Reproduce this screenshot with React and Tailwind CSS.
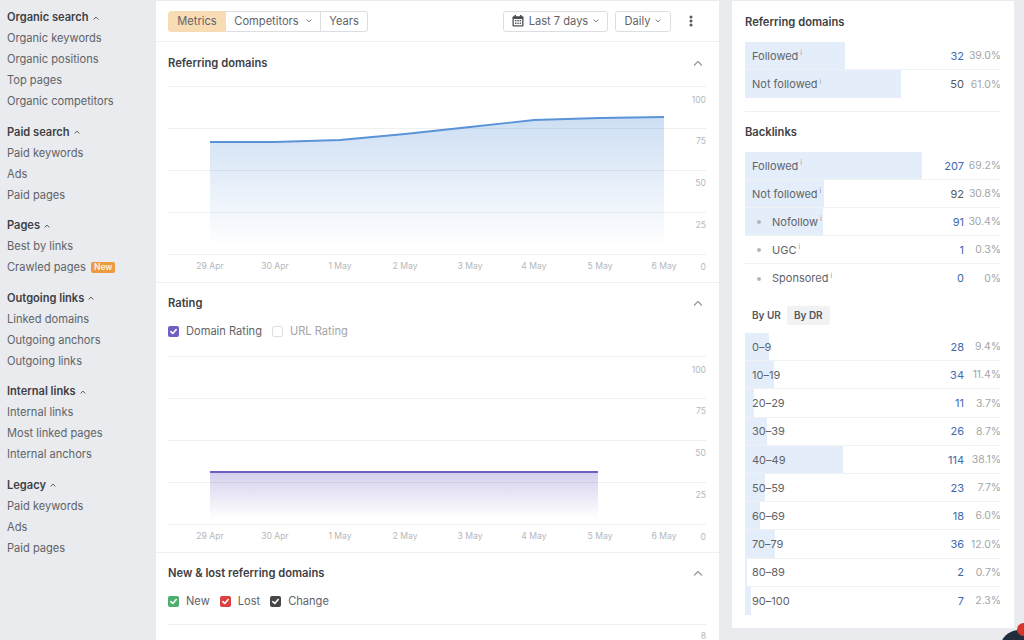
const nav = [
  { title: "Organic search", items: ["Organic keywords", "Organic positions", "Top pages", "Organic competitors"] },
  { title: "Paid search", items: ["Paid keywords", "Ads", "Paid pages"] },
  { title: "Pages", items: ["Best by links", "Crawled pages"] },
  { title: "Outgoing links", items: ["Linked domains", "Outgoing anchors", "Outgoing links"] },
  { title: "Internal links", items: ["Internal links", "Most linked pages", "Internal anchors"] },
  { title: "Legacy", items: ["Paid keywords", "Ads", "Paid pages"] },
];

const refDomains = [
  { label: "Followed", info: true, value: "32", pct: "39.0%", bar: 100, blue: true },
  { label: "Not followed", info: true, value: "50", pct: "61.0%", bar: 156 },
];

const backlinks = [
  { label: "Followed", info: true, value: "207", pct: "69.2%", bar: 177, blue: true },
  { label: "Not followed", info: true, value: "92", pct: "30.8%", bar: 79 },
  { label: "Nofollow", info: true, sub: true, value: "91", pct: "30.4%", bar: 78, blue: true },
  { label: "UGC", info: true, sub: true, value: "1", pct: "0.3%", bar: 0, blue: true },
  { label: "Sponsored", info: true, sub: true, value: "0", pct: "0%", bar: 0, blue: true },
];

const ranges = [
  { label: "0–9", value: "28", pct: "9.4%", bar: 24, blue: true },
  { label: "10–19", value: "34", pct: "11.4%", bar: 29, blue: true },
  { label: "20–29", value: "11", pct: "3.7%", bar: 9, blue: true },
  { label: "30–39", value: "26", pct: "8.7%", bar: 22, blue: true },
  { label: "40–49", value: "114", pct: "38.1%", bar: 98, blue: true },
  { label: "50–59", value: "23", pct: "7.7%", bar: 20, blue: true },
  { label: "60–69", value: "18", pct: "6.0%", bar: 15, blue: true },
  { label: "70–79", value: "36", pct: "12.0%", bar: 30, blue: true },
  { label: "80–89", value: "2", pct: "0.7%", bar: 2, blue: true },
  { label: "90–100", value: "7", pct: "2.3%", bar: 6, blue: true },
];

const dates = [
  ["29 Apr", 42],
  ["30 Apr", 107],
  ["1 May", 172],
  ["2 May", 237],
  ["3 May", 302],
  ["4 May", 366],
  ["5 May", 432],
  ["6 May", 496],
];

function Chevron({ up, className }) {
  return (
    <svg className={className} viewBox="0 0 10 6" fill="none" stroke="currentColor" strokeWidth="1.4" strokeLinecap="round" strokeLinejoin="round">
      <path d={up ? "M1.5 5 5 1.5 8.5 5" : "M1.5 1 5 4.5 8.5 1"} />
    </svg>
  );
}

function Check({ className, off }) {
  return (
    <span className={"flex h-[11px] w-[11px] items-center justify-center rounded-[2px] " + className}>
      {!off && (
        <svg className="h-[9px] w-[9px]" viewBox="0 0 10 10" fill="none" stroke="white" strokeWidth="1.8" strokeLinecap="round" strokeLinejoin="round">
          <path d="M2 5.2 4.2 7.2 8 2.8" />
        </svg>
      )}
    </span>
  );
}

function CalendarIcon() {
  return (
    <svg className="h-[12px] w-[12px]" viewBox="0 0 12 12" fill="#4a4d50">
      <rect x="2.5" y="0" width="1.5" height="2.5" />
      <rect x="8" y="0" width="1.5" height="2.5" />
      <rect x="0.5" y="1.2" width="11" height="10.3" rx="1" />
      <rect x="1.8" y="4" width="8.4" height="6.3" fill="#fff" />
      <g>
        <rect x="3" y="5" width="1.5" height="1.3" />
        <rect x="5.3" y="5" width="1.5" height="1.3" />
        <rect x="7.6" y="5" width="1.5" height="1.3" />
        <rect x="3" y="7.6" width="1.5" height="1.3" />
        <rect x="5.3" y="7.6" width="1.5" height="1.3" />
        <rect x="7.6" y="7.6" width="1.5" height="1.3" />
      </g>
    </svg>
  );
}

function Sidebar() {
  return (
    <aside className="flex w-[156px] shrink-0 flex-col gap-[9.5px] pl-[7px] pt-[7px] text-[11.1px] text-[#5f6368]">
      {nav.map((group) => (
        <div key={group.title}>
          <div className="flex h-[21px] items-center gap-[4px] font-semibold text-[#3d4044]">
            {group.title}
            <Chevron up className="h-[4px] w-[6px]" />
          </div>
          {group.items.map((item) => (
            <div key={item} className="flex h-[21px] items-center gap-[5px]">
              {item}
              {item === "Crawled pages" && (
                <span className="rounded-[2px] bg-[#ee9a3e] px-[3px] text-[8.5px] font-semibold leading-[11px] text-[#fdf3e4]">New</span>
              )}
            </div>
          ))}
        </div>
      ))}
    </aside>
  );
}

function Toolbar() {
  const btn = "flex h-[21px] items-center border border-[#dcdee1] text-[11.1px] text-[#5f6368]";
  return (
    <div className="flex h-[41px] shrink-0 items-center border-b border-[#f0f1f2] pl-[12px] pr-[26px]">
      <div className="flex">
        <div className={btn + " w-[58px] justify-center rounded-l-[3px] border-[#f6dcb5] bg-[#f8dcb4]"}>Metrics</div>
        <div className={btn + " w-[95px] justify-center gap-[7px] border-l-0"}>
          Competitors
          <Chevron className="h-[4px] w-[6px]" />
        </div>
        <div className={btn + " w-[47px] justify-center rounded-r-[3px] border-l-0"}>Years</div>
      </div>
      <div className={btn + " ml-auto w-[105px] justify-center gap-[5px] rounded-[3px]"}>
        <CalendarIcon />
        Last 7 days
        <Chevron className="h-[4px] w-[6px]" />
      </div>
      <div className={btn + " ml-[7px] w-[56px] justify-center gap-[5px] rounded-[3px]"}>
        Daily
        <Chevron className="h-[4px] w-[6px]" />
      </div>
      <svg className="ml-[18px] h-[12px] w-[4px]" viewBox="0 0 4 12" fill="#55585c">
        <circle cx="2" cy="2" r="1.5" />
        <circle cx="2" cy="6" r="1.5" />
        <circle cx="2" cy="10" r="1.5" />
      </svg>
    </div>
  );
}

function SectionHead({ title }) {
  return (
    <div className="flex h-[16px] items-center justify-between pr-[16px]">
      <h2 className="text-[11.2px] font-semibold text-[#3d4044]">{title}</h2>
      <Chevron up className="h-[6px] w-[10px] text-[#9a9da1]" />
    </div>
  );
}

// 538 wide plot, grid step about 42px, labels sit under each grid line
function Chart({ id, color, points, base, height, yLabels }) {
  const area = `M${points[0][0]} ${base} ` + points.map((p) => `L${p[0]} ${p[1]}`).join(" ") + ` L${points[points.length - 1][0]} ${base} Z`;
  return (
    <svg className="block" width="538" height={height} viewBox={`0 0 538 ${height}`} fontFamily="Inter, sans-serif">
      <defs>
        <linearGradient id={id} x1="0" y1="0" x2="0" y2="1">
          <stop offset="0" stopColor={color} stopOpacity="0.3" />
          <stop offset="1" stopColor={color} stopOpacity="0" />
        </linearGradient>
      </defs>
      {[0.5, 42.5, 84.5, 126.5, 168.5].map((y) => (
        <line key={y} x1="0" x2="538" y1={y} y2={y} stroke="#eeeff1" />
      ))}
      <path d={area} fill={`url(#${id})`} />
      <path d={"M" + points.map((p) => p.join(" ")).join(" L")} fill="none" stroke={color} strokeWidth="1.8" />
      {yLabels.map((l, i) => (
        <text key={l} x="538" y={16.5 + i * 41.8} textAnchor="end" fontSize="8.6" fill="#b5b7ba">{l}</text>
      ))}
      {dates.map(([d, x]) => (
        <text key={d} x={x} y="183" textAnchor="middle" fontSize="8.6" fill="#b5b7ba">{d}</text>
      ))}
    </svg>
  );
}

function StatRow({ row, tall }) {
  return (
    <div className={"relative flex items-center border-b border-[#f0f1f2] pl-[7px] pt-px text-[11px] last:border-b-0 " + (tall ? "h-[28.2px]" : "h-[28px]")}>
      {row.bar > 0 && <div className="absolute inset-y-0 left-0 bg-[#e4eefa]" style={{ width: row.bar }} />}
      <span className="relative flex items-center text-[#5f6368]">
        {row.sub && <span className="ml-[5px] mr-[11px] h-[4px] w-[4px] rounded-full bg-[#b4b6b9]" />}
        {row.label}
        {row.info && <span className="-mt-[7px] ml-[2px] text-[7px] leading-none text-[#9a9da1]">i</span>}
      </span>
      <span className={"relative ml-auto " + (row.blue ? "text-[#3f69ad]" : "text-[#55585c]")}>{row.value}</span>
      <span className="relative w-[37px] shrink-0 text-right text-[10.4px] text-[#a3a5a8]">{row.pct}</span>
    </div>
  );
}

export default function App() {
  const referring = [[42, 56], [107, 56], [172, 54], [237, 48], [302, 41], [366, 34], [432, 32], [496, 31]];
  const rating = [[42, 116], [430, 116]];

  return (
    <div className="relative flex h-[640px] w-[1024px] overflow-hidden bg-[#e9ebee] font-['Inter',sans-serif]">
      <Sidebar />

      <main className="mt-px flex h-[639px] w-[563px] shrink-0 flex-col overflow-hidden bg-white">
        <Toolbar />
        <section className="h-[241px] shrink-0 border-b border-[#eeeff1] pl-[12px]">
          <div className="pb-[15px] pt-[13px]">
            <SectionHead title="Referring domains" />
          </div>
          <Chart id="refFill" color="#5a93d8" points={referring} base={162} height={190} yLabels={["100", "75", "50", "25", "0"]} />
        </section>
        <section className="h-[270px] shrink-0 border-b border-[#eeeff1] pl-[12px]">
          <div className="pt-[12px]">
            <SectionHead title="Rating" />
          </div>
          <div className="mt-[12px] flex h-[17px] items-center text-[11.1px] text-[#5f6368]">
            <Check className="bg-[#6e5fc0]" />
            <span className="ml-[7px]">Domain Rating</span>
            <Check off className="ml-[10px] border border-[#dcdee1]" />
            <span className="ml-[7px] text-[#a3a5a8]">URL Rating</span>
          </div>
          <div className="mt-[16px]">
            <Chart id="rateFill" color="#6e5fc0" points={rating} base={162} height={190} yLabels={["100", "75", "50", "25", "0"]} />
          </div>
        </section>
        <section className="shrink-0 pl-[12px]">
          <div className="pt-[12px]">
            <SectionHead title="New & lost referring domains" />
          </div>
          <div className="mt-[12px] flex h-[17px] items-center text-[11.1px] text-[#5f6368]">
            <Check className="bg-[#4caf6d]" />
            <span className="ml-[7px]">New</span>
            <Check className="ml-[10px] bg-[#dc4040]" />
            <span className="ml-[7px]">Lost</span>
            <Check className="ml-[10px] bg-[#454749]" />
            <span className="ml-[7px]">Change</span>
          </div>
          <div className="mt-[14px] flex h-[16px] w-[538px] justify-end border-t border-[#eeeff1] pt-[7px] text-[8.6px] leading-[8px] text-[#b5b7ba]">8</div>
        </section>
      </main>

      <aside className="ml-[13px] mt-px h-[627px] w-[282px] shrink-0 bg-white px-[13px]">
        <h2 className="pb-[12px] pt-[13px] text-[11.2px] font-semibold leading-[16px] text-[#3d4044]">Referring domains</h2>
        <div>
          {refDomains.map((row) => <StatRow key={row.label} row={row} />)}
        </div>
        <div className="mt-[13px] border-t border-[#eeeff1] pt-[12px]">
          <h2 className="pb-[12px] text-[11.2px] font-semibold leading-[16px] text-[#3d4044]">Backlinks</h2>
          {backlinks.map((row) => <StatRow key={row.label} row={row} />)}
        </div>
        <div className="mt-[15px] flex h-[17px] items-center pl-[2px] text-[10px] font-semibold text-[#55585c]">
          <span className="px-[5px] py-[2px]">By UR</span>
          <span className="ml-[1px] rounded-[2px] bg-[#f1f2f3] px-[7px] py-[2px]">By DR</span>
        </div>
        <div className="mt-[9px]">
          {ranges.map((row) => <StatRow key={row.label} row={row} tall />)}
        </div>
      </aside>

      <div className="absolute -bottom-[28px] -right-[14px] h-[38px] w-[38px] rounded-full bg-[#1f2d3d]" />
      <div className="absolute bottom-[4px] right-[-6px] h-[13px] w-[13px] rounded-full bg-[#d9362b]" />
    </div>
  );
}
